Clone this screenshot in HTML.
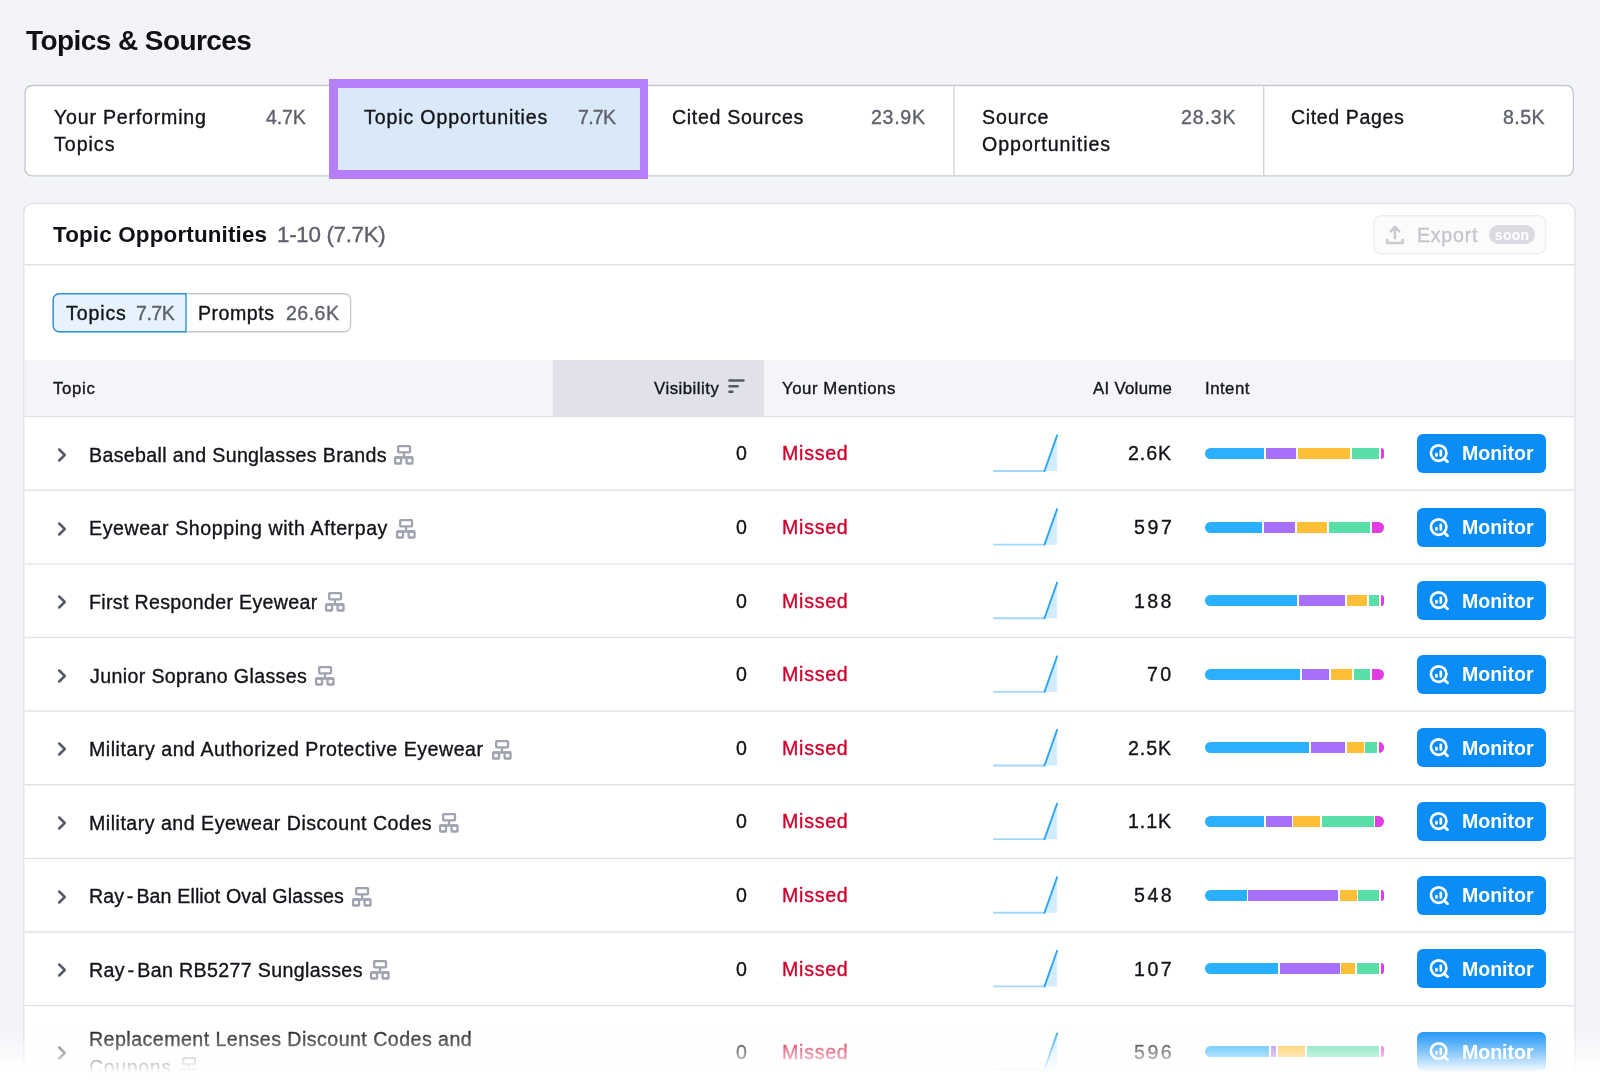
<!DOCTYPE html>
<html><head><meta charset="utf-8"><style>
html,body{margin:0;padding:0;}
body{width:1600px;height:1084px;overflow:hidden;position:relative;background:#F3F4F8;font-family:"Liberation Sans",sans-serif;}
.t{position:absolute;white-space:nowrap;will-change:transform;}
.tabs{position:absolute;left:25px;top:85.5px;width:1548.4px;height:90.4px;background:#fff;border-radius:7px;}
.ov{position:absolute;left:0;top:0;overflow:visible;}
.vdiv{position:absolute;top:85.5px;width:1px;height:90px;background:#D3D5DC;}
.selbg{position:absolute;left:335.4px;top:86.2px;width:308.3px;height:89px;background:#DAE9F8;}
.purple{position:absolute;left:329.3px;top:79.3px;width:318.9px;height:99.7px;background:#B77EFB;}
.purplein{position:absolute;left:337.6px;top:87.6px;width:302.4px;height:82.8px;background:#DAE9F8;}
.card{position:absolute;left:23.8px;top:203.4px;width:1551.2px;height:1000px;background:#fff;border-radius:9px;}
.hdiv{position:absolute;left:24.8px;width:1548.4px;height:1px;background:#E3E4EA;}
.export{position:absolute;left:1373.25px;top:215px;width:171px;height:37.5px;border:1px solid #EEEFF2;border-radius:7px;background:#FBFBFC;}
.soon{position:absolute;left:1489.25px;top:224.5px;width:45.75px;height:19.75px;border-radius:10px;background:#DADBE0;color:#fff;font-size:14px;line-height:20px;font-weight:700;text-align:center;letter-spacing:0.3px;}
.seg{position:absolute;left:52.5px;top:293.1px;width:297.8px;height:37.4px;border:1px solid #C7C9D1;border-radius:6px;}
.seg1{position:absolute;left:52.5px;top:293.1px;width:132.2px;height:37.4px;border:1px solid #2B94E1;border-radius:6px 0 0 6px;background:#E6F3FE;}
.thead{position:absolute;left:24.5px;top:359.9px;width:1549.8px;height:56.7px;background:#F4F5F9;}
.sortcol{position:absolute;left:553px;top:359.9px;width:211.3px;height:56.7px;background:#E0E1E9;}
.segb{position:absolute;height:11px;}
.mon{position:absolute;left:1417px;width:129px;height:39px;border-radius:6px;background:#0A8DF6;}
.fade{position:absolute;left:0;top:1025px;width:1600px;height:59px;background:linear-gradient(to bottom,rgba(255,255,255,0.000) 0.0%,rgba(255,255,255,0.057) 6.8%,rgba(255,255,255,0.127) 13.6%,rgba(255,255,255,0.203) 20.3%,rgba(255,255,255,0.283) 27.1%,rgba(255,255,255,0.365) 33.9%,rgba(255,255,255,0.451) 40.7%,rgba(255,255,255,0.538) 47.5%,rgba(255,255,255,0.627) 54.2%,rgba(255,255,255,0.718) 61.0%,rgba(255,255,255,0.811) 67.8%,rgba(255,255,255,0.905) 74.6%,rgba(255,255,255,1.000) 81.4%,rgba(255,255,255,1) 100%);}
</style></head><body>
<div class="t" style="left:25.60px;top:26.70px;font-size:28px;line-height:28px;color:#0F1116;font-weight:700;letter-spacing:-0.573px;">Topics &amp; Sources</div>
<div class="tabs"></div>
<svg class="ov" width="1600" height="1084" viewBox="0 0 1600 1084"><rect x="25.0" y="85.5" width="1548.4" height="90.4" rx="7" fill="none" stroke="#C6C9D1" stroke-width="1.4"/><path d="M334.68 86.2V175.2" stroke="#D0D3DA" stroke-width="1.4"/><path d="M644.36 86.2V175.2" stroke="#D0D3DA" stroke-width="1.4"/><path d="M954.04 86.2V175.2" stroke="#D0D3DA" stroke-width="1.4"/><path d="M1263.72 86.2V175.2" stroke="#D0D3DA" stroke-width="1.4"/></svg>
<div class="selbg"></div><div class="purple"></div><div class="purplein"></div>
<div class="t" style="left:54.20px;top:107.51px;font-size:19.6px;line-height:19.6px;color:#121419;font-weight:400;letter-spacing:0.786px;-webkit-text-stroke:0.35px #121419;">Your Performing</div>
<div class="t" style="left:54.20px;top:135.11px;font-size:19.6px;line-height:19.6px;color:#121419;font-weight:400;letter-spacing:0.980px;-webkit-text-stroke:0.35px #121419;">Topics</div>
<div class="t" style="left:266.00px;top:107.51px;font-size:19.6px;line-height:19.6px;color:#5E616B;font-weight:400;letter-spacing:-0.133px;-webkit-text-stroke:0.35px #5E616B;">4.7K</div>
<div class="t" style="left:363.75px;top:107.51px;font-size:19.6px;line-height:19.6px;color:#121419;font-weight:400;letter-spacing:0.861px;-webkit-text-stroke:0.35px #121419;">Topic Opportunities</div>
<div class="t" style="left:577.75px;top:107.51px;font-size:19.6px;line-height:19.6px;color:#5E616B;font-weight:400;letter-spacing:-0.750px;-webkit-text-stroke:0.35px #5E616B;">7.7K</div>
<div class="t" style="left:672.00px;top:107.51px;font-size:19.6px;line-height:19.6px;color:#121419;font-weight:400;letter-spacing:0.683px;-webkit-text-stroke:0.35px #121419;">Cited Sources</div>
<div class="t" style="left:871.20px;top:107.51px;font-size:19.6px;line-height:19.6px;color:#5E616B;font-weight:400;letter-spacing:0.700px;-webkit-text-stroke:0.35px #5E616B;">23.9K</div>
<div class="t" style="left:981.50px;top:107.51px;font-size:19.6px;line-height:19.6px;color:#121419;font-weight:400;letter-spacing:0.880px;-webkit-text-stroke:0.35px #121419;">Source</div>
<div class="t" style="left:981.50px;top:135.11px;font-size:19.6px;line-height:19.6px;color:#121419;font-weight:400;letter-spacing:0.967px;-webkit-text-stroke:0.35px #121419;">Opportunities</div>
<div class="t" style="left:1180.70px;top:107.51px;font-size:19.6px;line-height:19.6px;color:#5E616B;font-weight:400;letter-spacing:0.825px;-webkit-text-stroke:0.35px #5E616B;">28.3K</div>
<div class="t" style="left:1291.00px;top:107.51px;font-size:19.6px;line-height:19.6px;color:#121419;font-weight:400;letter-spacing:0.600px;-webkit-text-stroke:0.35px #121419;">Cited Pages</div>
<div class="t" style="left:1502.80px;top:107.51px;font-size:19.6px;line-height:19.6px;color:#5E616B;font-weight:400;letter-spacing:0.400px;-webkit-text-stroke:0.35px #5E616B;">8.5K</div>
<div class="card"></div>
<div class="t" style="left:53.20px;top:223.64px;font-size:22.4px;line-height:22.4px;color:#0F1116;font-weight:700;letter-spacing:0.167px;">Topic Opportunities</div>
<div class="t" style="left:276.50px;top:223.64px;font-size:22.4px;line-height:22.4px;color:#5E616B;font-weight:400;letter-spacing:-0.320px;-webkit-text-stroke:0.35px #5E616B;">1-10 (7.7K)</div>
<svg class="ov" width="1600" height="1084" viewBox="0 0 1600 1084"><rect x="1373.95" y="215.7" width="171.6" height="38.1" rx="7" fill="#FBFBFC" stroke="#EDEEF1" stroke-width="1.4"/></svg>
<svg style="position:absolute;left:1383px;top:224px" width="24" height="22" viewBox="0 0 24 22"><path d="M11.9 3.2v10.9M7.6 7.3L11.9 3.0 16.2 7.3M4.3 15.9v3.1h15.4v-3.1" fill="none" stroke="#CACBD1" stroke-width="2.6" stroke-linecap="round" stroke-linejoin="round"/></svg>
<div class="t" style="left:1417.25px;top:225.61px;font-size:19.6px;line-height:19.6px;color:#C3C5CC;font-weight:400;letter-spacing:0.750px;-webkit-text-stroke:0.35px #C3C5CC;">Export</div>
<div class="soon">soon</div>
<svg class="ov" width="1600" height="1084" viewBox="0 0 1600 1084"><rect x="53.2" y="293.8" width="297.4" height="38" rx="6" fill="#fff" stroke="#C6C9D1" stroke-width="1.4"/><path d="M186.0 293.8H59.2A6 6 0 0 0 53.2 299.8V325.8A6 6 0 0 0 59.2 331.8H186.0Z" fill="#E6F3FE" stroke="#2F90DC" stroke-width="1.4"/></svg>
<div class="t" style="left:65.60px;top:303.51px;font-size:19.6px;line-height:19.6px;color:#121419;font-weight:400;letter-spacing:0.860px;-webkit-text-stroke:0.35px #121419;">Topics</div>
<div class="t" style="left:135.90px;top:303.51px;font-size:19.6px;line-height:19.6px;color:#5E616B;font-weight:400;letter-spacing:-0.500px;-webkit-text-stroke:0.35px #5E616B;">7.7K</div>
<div class="t" style="left:197.70px;top:303.51px;font-size:19.6px;line-height:19.6px;color:#121419;font-weight:400;letter-spacing:0.500px;-webkit-text-stroke:0.35px #121419;">Prompts</div>
<div class="t" style="left:285.80px;top:303.51px;font-size:19.6px;line-height:19.6px;color:#5E616B;font-weight:400;letter-spacing:0.450px;-webkit-text-stroke:0.35px #5E616B;">26.6K</div>
<div class="thead"></div><div class="sortcol"></div>
<svg class="ov" width="1600" height="1084" viewBox="0 0 1600 1084"><path d="M23.8 1200V212.4A9 9 0 0 1 32.8 203.4H1566A9 9 0 0 1 1575 212.4V1200" fill="none" stroke="#E1E2E9" stroke-width="1.4"/><path d="M24.5 264.7H1574.3" stroke="#E1E2E9" stroke-width="1.4"/><path d="M24.5 416.60H1574.3" stroke="#E1E2E9" stroke-width="1.4"/><path d="M24.5 490.23H1574.3" stroke="#E1E2E9" stroke-width="1.4"/><path d="M24.5 563.85H1574.3" stroke="#E1E2E9" stroke-width="1.4"/><path d="M24.5 637.48H1574.3" stroke="#E1E2E9" stroke-width="1.4"/><path d="M24.5 711.10H1574.3" stroke="#E1E2E9" stroke-width="1.4"/><path d="M24.5 784.73H1574.3" stroke="#E1E2E9" stroke-width="1.4"/><path d="M24.5 858.35H1574.3" stroke="#E1E2E9" stroke-width="1.4"/><path d="M24.5 931.98H1574.3" stroke="#E1E2E9" stroke-width="1.4"/><path d="M24.5 1005.60H1574.3" stroke="#E1E2E9" stroke-width="1.4"/></svg>
<div class="t" style="left:53.25px;top:380.88px;font-size:16.8px;line-height:16.8px;color:#121419;font-weight:400;letter-spacing:0.688px;-webkit-text-stroke:0.35px #121419;">Topic</div>
<div class="t" style="left:654.10px;top:380.88px;font-size:16.8px;line-height:16.8px;color:#121419;font-weight:400;letter-spacing:0.511px;-webkit-text-stroke:0.35px #121419;">Visibility</div>
<svg style="position:absolute;left:727px;top:377px" width="20" height="20" viewBox="0 0 20 20"><path d="M2.4 3.5h14.1M2.4 9.3h8.3M2.4 14.8h3.1" stroke="#575A64" stroke-width="2.4" stroke-linecap="round" fill="none"/></svg>
<div class="t" style="left:782.40px;top:380.88px;font-size:16.8px;line-height:16.8px;color:#121419;font-weight:400;letter-spacing:0.558px;-webkit-text-stroke:0.35px #121419;">Your Mentions</div>
<div class="t" style="left:1092.90px;top:380.88px;font-size:16.8px;line-height:16.8px;color:#121419;font-weight:400;letter-spacing:0.300px;-webkit-text-stroke:0.35px #121419;">AI Volume</div>
<div class="t" style="left:1205.20px;top:380.88px;font-size:16.8px;line-height:16.8px;color:#121419;font-weight:400;letter-spacing:0.480px;-webkit-text-stroke:0.35px #121419;">Intent</div>
<svg style="position:absolute;left:52px;top:444.91px" width="20" height="20" viewBox="0 0 20 20"><path d="M7.2 4.5L12.8 10 7.2 15.5" fill="none" stroke="#575B66" stroke-width="2.5" stroke-linecap="round" stroke-linejoin="round"/></svg>
<div class="t" style="left:89.30px;top:445.72px;font-size:19.6px;line-height:19.6px;color:#121419;font-weight:400;letter-spacing:0.345px;-webkit-text-stroke:0.35px #121419;">Baseball and Sunglasses Brands</div>
<svg style="position:absolute;left:393.20px;top:444.11px" width="22" height="22" viewBox="0 0 22 22"><g fill="none" stroke="#A0A3AE" stroke-width="2.3" stroke-linejoin="round"><rect x="5.2" y="2.1" width="11.8" height="6.2" rx="0.6"/><rect x="2.1" y="13.5" width="5.9" height="6.0" rx="0.6"/><rect x="13.6" y="13.5" width="5.9" height="6.0" rx="0.6"/><path d="M11.0 8.3v5.2M2.1 13.5h17.4"/></g></svg>
<div class="t" style="left:736.20px;top:444.32px;font-size:19.6px;line-height:19.6px;color:#121419;font-weight:400;letter-spacing:0.000px;-webkit-text-stroke:0.35px #121419;">0</div>
<div class="t" style="left:782.30px;top:444.32px;font-size:19.6px;line-height:19.6px;color:#D0002E;font-weight:400;letter-spacing:0.740px;-webkit-text-stroke:0.35px #D0002E;">Missed</div>
<svg style="position:absolute;left:0;top:0;overflow:visible" width="1" height="1"><path d="M1044.5 471.01L1057.1 435.41V471.01Z" fill="#D3ECFD"/><path d="M993.1 471.01H1044.5" stroke="#A3D8FB" stroke-width="1.9" fill="none"/><path d="M1044.5 471.01L1057.1 435.41" stroke="#2AA5F8" stroke-width="1.9" fill="none" stroke-linecap="round"/></svg>
<div class="t" style="left:1128.40px;top:444.32px;font-size:19.6px;line-height:19.6px;color:#121419;font-weight:400;letter-spacing:0.933px;-webkit-text-stroke:0.35px #121419;">2.6K</div>
<div class="segb" style="left:1205.00px;top:447.91px;width:59.00px;background:#2AB0FF;border-radius:5.5px 0 0 5.5px;"></div>
<div class="segb" style="left:1265.60px;top:447.91px;width:30.90px;background:#A86FFB;"></div>
<div class="segb" style="left:1298.10px;top:447.91px;width:51.90px;background:#FFBE38;"></div>
<div class="segb" style="left:1351.50px;top:447.91px;width:27.50px;background:#5ADEA8;"></div>
<div class="segb" style="left:1380.60px;top:447.91px;width:3.10px;background:#E03DE3;border-radius:0 5.5px 5.5px 0;"></div>
<div class="mon" style="top:433.91px"></div>
<svg style="position:absolute;left:1427px;top:442.91px" width="24" height="24" viewBox="0 0 24 24"><circle cx="11.65" cy="10.05" r="7.75" fill="none" stroke="#fff" stroke-width="2.7"/><path d="M17.1 15.5L20.5 18.8" stroke="#fff" stroke-width="2.8" stroke-linecap="round"/><path d="M9.45 11.05v1.5M13.8 7.85v4.7" stroke="#fff" stroke-width="2.7" stroke-linecap="round"/></svg>
<div class="t" style="left:1461.80px;top:444.32px;font-size:19.6px;line-height:19.6px;color:#FFFFFF;font-weight:700;letter-spacing:-0.050px;">Monitor</div>
<svg style="position:absolute;left:52px;top:518.54px" width="20" height="20" viewBox="0 0 20 20"><path d="M7.2 4.5L12.8 10 7.2 15.5" fill="none" stroke="#575B66" stroke-width="2.5" stroke-linecap="round" stroke-linejoin="round"/></svg>
<div class="t" style="left:89.30px;top:519.35px;font-size:19.6px;line-height:19.6px;color:#121419;font-weight:400;letter-spacing:0.562px;-webkit-text-stroke:0.35px #121419;">Eyewear Shopping with Afterpay</div>
<svg style="position:absolute;left:394.50px;top:517.74px" width="22" height="22" viewBox="0 0 22 22"><g fill="none" stroke="#A0A3AE" stroke-width="2.3" stroke-linejoin="round"><rect x="5.2" y="2.1" width="11.8" height="6.2" rx="0.6"/><rect x="2.1" y="13.5" width="5.9" height="6.0" rx="0.6"/><rect x="13.6" y="13.5" width="5.9" height="6.0" rx="0.6"/><path d="M11.0 8.3v5.2M2.1 13.5h17.4"/></g></svg>
<div class="t" style="left:736.20px;top:517.95px;font-size:19.6px;line-height:19.6px;color:#121419;font-weight:400;letter-spacing:0.000px;-webkit-text-stroke:0.35px #121419;">0</div>
<div class="t" style="left:782.30px;top:517.95px;font-size:19.6px;line-height:19.6px;color:#D0002E;font-weight:400;letter-spacing:0.740px;-webkit-text-stroke:0.35px #D0002E;">Missed</div>
<svg style="position:absolute;left:0;top:0;overflow:visible" width="1" height="1"><path d="M1044.5 544.64L1057.1 509.04V544.64Z" fill="#D3ECFD"/><path d="M993.1 544.64H1044.5" stroke="#A3D8FB" stroke-width="1.9" fill="none"/><path d="M1044.5 544.64L1057.1 509.04" stroke="#2AA5F8" stroke-width="1.9" fill="none" stroke-linecap="round"/></svg>
<div class="t" style="left:1133.90px;top:517.95px;font-size:19.6px;line-height:19.6px;color:#121419;font-weight:400;letter-spacing:2.650px;-webkit-text-stroke:0.35px #121419;">597</div>
<div class="segb" style="left:1205.00px;top:521.54px;width:57.30px;background:#2AB0FF;border-radius:5.5px 0 0 5.5px;"></div>
<div class="segb" style="left:1264.30px;top:521.54px;width:30.70px;background:#A86FFB;"></div>
<div class="segb" style="left:1296.70px;top:521.54px;width:30.70px;background:#FFBE38;"></div>
<div class="segb" style="left:1329.00px;top:521.54px;width:41.20px;background:#5ADEA8;"></div>
<div class="segb" style="left:1372.00px;top:521.54px;width:11.70px;background:#E03DE3;border-radius:0 5.5px 5.5px 0;"></div>
<div class="mon" style="top:507.54px"></div>
<svg style="position:absolute;left:1427px;top:516.54px" width="24" height="24" viewBox="0 0 24 24"><circle cx="11.65" cy="10.05" r="7.75" fill="none" stroke="#fff" stroke-width="2.7"/><path d="M17.1 15.5L20.5 18.8" stroke="#fff" stroke-width="2.8" stroke-linecap="round"/><path d="M9.45 11.05v1.5M13.8 7.85v4.7" stroke="#fff" stroke-width="2.7" stroke-linecap="round"/></svg>
<div class="t" style="left:1461.80px;top:517.95px;font-size:19.6px;line-height:19.6px;color:#FFFFFF;font-weight:700;letter-spacing:-0.050px;">Monitor</div>
<svg style="position:absolute;left:52px;top:592.16px" width="20" height="20" viewBox="0 0 20 20"><path d="M7.2 4.5L12.8 10 7.2 15.5" fill="none" stroke="#575B66" stroke-width="2.5" stroke-linecap="round" stroke-linejoin="round"/></svg>
<div class="t" style="left:89.30px;top:592.97px;font-size:19.6px;line-height:19.6px;color:#121419;font-weight:400;letter-spacing:0.327px;-webkit-text-stroke:0.35px #121419;">First Responder Eyewear</div>
<svg style="position:absolute;left:324.40px;top:591.36px" width="22" height="22" viewBox="0 0 22 22"><g fill="none" stroke="#A0A3AE" stroke-width="2.3" stroke-linejoin="round"><rect x="5.2" y="2.1" width="11.8" height="6.2" rx="0.6"/><rect x="2.1" y="13.5" width="5.9" height="6.0" rx="0.6"/><rect x="13.6" y="13.5" width="5.9" height="6.0" rx="0.6"/><path d="M11.0 8.3v5.2M2.1 13.5h17.4"/></g></svg>
<div class="t" style="left:736.20px;top:591.57px;font-size:19.6px;line-height:19.6px;color:#121419;font-weight:400;letter-spacing:0.000px;-webkit-text-stroke:0.35px #121419;">0</div>
<div class="t" style="left:782.30px;top:591.57px;font-size:19.6px;line-height:19.6px;color:#D0002E;font-weight:400;letter-spacing:0.740px;-webkit-text-stroke:0.35px #D0002E;">Missed</div>
<svg style="position:absolute;left:0;top:0;overflow:visible" width="1" height="1"><path d="M1044.5 618.26L1057.1 582.66V618.26Z" fill="#D3ECFD"/><path d="M993.1 618.26H1044.5" stroke="#A3D8FB" stroke-width="1.9" fill="none"/><path d="M1044.5 618.26L1057.1 582.66" stroke="#2AA5F8" stroke-width="1.9" fill="none" stroke-linecap="round"/></svg>
<div class="t" style="left:1134.40px;top:591.57px;font-size:19.6px;line-height:19.6px;color:#121419;font-weight:400;letter-spacing:2.400px;-webkit-text-stroke:0.35px #121419;">188</div>
<div class="segb" style="left:1205.00px;top:595.16px;width:92.00px;background:#2AB0FF;border-radius:5.5px 0 0 5.5px;"></div>
<div class="segb" style="left:1299.00px;top:595.16px;width:46.00px;background:#A86FFB;"></div>
<div class="segb" style="left:1346.70px;top:595.16px;width:20.60px;background:#FFBE38;"></div>
<div class="segb" style="left:1369.00px;top:595.16px;width:9.90px;background:#5ADEA8;"></div>
<div class="segb" style="left:1380.50px;top:595.16px;width:3.20px;background:#E03DE3;border-radius:0 5.5px 5.5px 0;"></div>
<div class="mon" style="top:581.16px"></div>
<svg style="position:absolute;left:1427px;top:590.16px" width="24" height="24" viewBox="0 0 24 24"><circle cx="11.65" cy="10.05" r="7.75" fill="none" stroke="#fff" stroke-width="2.7"/><path d="M17.1 15.5L20.5 18.8" stroke="#fff" stroke-width="2.8" stroke-linecap="round"/><path d="M9.45 11.05v1.5M13.8 7.85v4.7" stroke="#fff" stroke-width="2.7" stroke-linecap="round"/></svg>
<div class="t" style="left:1461.80px;top:591.57px;font-size:19.6px;line-height:19.6px;color:#FFFFFF;font-weight:700;letter-spacing:-0.050px;">Monitor</div>
<svg style="position:absolute;left:52px;top:665.79px" width="20" height="20" viewBox="0 0 20 20"><path d="M7.2 4.5L12.8 10 7.2 15.5" fill="none" stroke="#575B66" stroke-width="2.5" stroke-linecap="round" stroke-linejoin="round"/></svg>
<div class="t" style="left:90.30px;top:666.60px;font-size:19.6px;line-height:19.6px;color:#121419;font-weight:400;letter-spacing:0.367px;-webkit-text-stroke:0.35px #121419;">Junior Soprano Glasses</div>
<svg style="position:absolute;left:313.90px;top:664.99px" width="22" height="22" viewBox="0 0 22 22"><g fill="none" stroke="#A0A3AE" stroke-width="2.3" stroke-linejoin="round"><rect x="5.2" y="2.1" width="11.8" height="6.2" rx="0.6"/><rect x="2.1" y="13.5" width="5.9" height="6.0" rx="0.6"/><rect x="13.6" y="13.5" width="5.9" height="6.0" rx="0.6"/><path d="M11.0 8.3v5.2M2.1 13.5h17.4"/></g></svg>
<div class="t" style="left:736.20px;top:665.20px;font-size:19.6px;line-height:19.6px;color:#121419;font-weight:400;letter-spacing:0.000px;-webkit-text-stroke:0.35px #121419;">0</div>
<div class="t" style="left:782.30px;top:665.20px;font-size:19.6px;line-height:19.6px;color:#D0002E;font-weight:400;letter-spacing:0.740px;-webkit-text-stroke:0.35px #D0002E;">Missed</div>
<svg style="position:absolute;left:0;top:0;overflow:visible" width="1" height="1"><path d="M1044.5 691.89L1057.1 656.29V691.89Z" fill="#D3ECFD"/><path d="M993.1 691.89H1044.5" stroke="#A3D8FB" stroke-width="1.9" fill="none"/><path d="M1044.5 691.89L1057.1 656.29" stroke="#2AA5F8" stroke-width="1.9" fill="none" stroke-linecap="round"/></svg>
<div class="t" style="left:1146.90px;top:665.20px;font-size:19.6px;line-height:19.6px;color:#121419;font-weight:400;letter-spacing:2.300px;-webkit-text-stroke:0.35px #121419;">70</div>
<div class="segb" style="left:1205.00px;top:668.79px;width:95.00px;background:#2AB0FF;border-radius:5.5px 0 0 5.5px;"></div>
<div class="segb" style="left:1302.00px;top:668.79px;width:27.40px;background:#A86FFB;"></div>
<div class="segb" style="left:1331.00px;top:668.79px;width:21.00px;background:#FFBE38;"></div>
<div class="segb" style="left:1353.60px;top:668.79px;width:16.60px;background:#5ADEA8;"></div>
<div class="segb" style="left:1372.00px;top:668.79px;width:11.70px;background:#E03DE3;border-radius:0 5.5px 5.5px 0;"></div>
<div class="mon" style="top:654.79px"></div>
<svg style="position:absolute;left:1427px;top:663.79px" width="24" height="24" viewBox="0 0 24 24"><circle cx="11.65" cy="10.05" r="7.75" fill="none" stroke="#fff" stroke-width="2.7"/><path d="M17.1 15.5L20.5 18.8" stroke="#fff" stroke-width="2.8" stroke-linecap="round"/><path d="M9.45 11.05v1.5M13.8 7.85v4.7" stroke="#fff" stroke-width="2.7" stroke-linecap="round"/></svg>
<div class="t" style="left:1461.80px;top:665.20px;font-size:19.6px;line-height:19.6px;color:#FFFFFF;font-weight:700;letter-spacing:-0.050px;">Monitor</div>
<svg style="position:absolute;left:52px;top:739.41px" width="20" height="20" viewBox="0 0 20 20"><path d="M7.2 4.5L12.8 10 7.2 15.5" fill="none" stroke="#575B66" stroke-width="2.5" stroke-linecap="round" stroke-linejoin="round"/></svg>
<div class="t" style="left:89.30px;top:740.22px;font-size:19.6px;line-height:19.6px;color:#121419;font-weight:400;letter-spacing:0.527px;-webkit-text-stroke:0.35px #121419;">Military and Authorized Protective Eyewear</div>
<svg style="position:absolute;left:490.80px;top:738.61px" width="22" height="22" viewBox="0 0 22 22"><g fill="none" stroke="#A0A3AE" stroke-width="2.3" stroke-linejoin="round"><rect x="5.2" y="2.1" width="11.8" height="6.2" rx="0.6"/><rect x="2.1" y="13.5" width="5.9" height="6.0" rx="0.6"/><rect x="13.6" y="13.5" width="5.9" height="6.0" rx="0.6"/><path d="M11.0 8.3v5.2M2.1 13.5h17.4"/></g></svg>
<div class="t" style="left:736.20px;top:738.82px;font-size:19.6px;line-height:19.6px;color:#121419;font-weight:400;letter-spacing:0.000px;-webkit-text-stroke:0.35px #121419;">0</div>
<div class="t" style="left:782.30px;top:738.82px;font-size:19.6px;line-height:19.6px;color:#D0002E;font-weight:400;letter-spacing:0.740px;-webkit-text-stroke:0.35px #D0002E;">Missed</div>
<svg style="position:absolute;left:0;top:0;overflow:visible" width="1" height="1"><path d="M1044.5 765.51L1057.1 729.91V765.51Z" fill="#D3ECFD"/><path d="M993.1 765.51H1044.5" stroke="#A3D8FB" stroke-width="1.9" fill="none"/><path d="M1044.5 765.51L1057.1 729.91" stroke="#2AA5F8" stroke-width="1.9" fill="none" stroke-linecap="round"/></svg>
<div class="t" style="left:1128.40px;top:738.82px;font-size:19.6px;line-height:19.6px;color:#121419;font-weight:400;letter-spacing:0.933px;-webkit-text-stroke:0.35px #121419;">2.5K</div>
<div class="segb" style="left:1205.00px;top:742.41px;width:104.10px;background:#2AB0FF;border-radius:5.5px 0 0 5.5px;"></div>
<div class="segb" style="left:1310.80px;top:742.41px;width:34.20px;background:#A86FFB;"></div>
<div class="segb" style="left:1346.70px;top:742.41px;width:17.40px;background:#FFBE38;"></div>
<div class="segb" style="left:1365.30px;top:742.41px;width:11.90px;background:#5ADEA8;"></div>
<div class="segb" style="left:1378.90px;top:742.41px;width:4.80px;background:#E03DE3;border-radius:0 5.5px 5.5px 0;"></div>
<div class="mon" style="top:728.41px"></div>
<svg style="position:absolute;left:1427px;top:737.41px" width="24" height="24" viewBox="0 0 24 24"><circle cx="11.65" cy="10.05" r="7.75" fill="none" stroke="#fff" stroke-width="2.7"/><path d="M17.1 15.5L20.5 18.8" stroke="#fff" stroke-width="2.8" stroke-linecap="round"/><path d="M9.45 11.05v1.5M13.8 7.85v4.7" stroke="#fff" stroke-width="2.7" stroke-linecap="round"/></svg>
<div class="t" style="left:1461.80px;top:738.82px;font-size:19.6px;line-height:19.6px;color:#FFFFFF;font-weight:700;letter-spacing:-0.050px;">Monitor</div>
<svg style="position:absolute;left:52px;top:813.04px" width="20" height="20" viewBox="0 0 20 20"><path d="M7.2 4.5L12.8 10 7.2 15.5" fill="none" stroke="#575B66" stroke-width="2.5" stroke-linecap="round" stroke-linejoin="round"/></svg>
<div class="t" style="left:89.30px;top:813.85px;font-size:19.6px;line-height:19.6px;color:#121419;font-weight:400;letter-spacing:0.499px;-webkit-text-stroke:0.35px #121419;">Military and Eyewear Discount Codes</div>
<svg style="position:absolute;left:438.15px;top:812.24px" width="22" height="22" viewBox="0 0 22 22"><g fill="none" stroke="#A0A3AE" stroke-width="2.3" stroke-linejoin="round"><rect x="5.2" y="2.1" width="11.8" height="6.2" rx="0.6"/><rect x="2.1" y="13.5" width="5.9" height="6.0" rx="0.6"/><rect x="13.6" y="13.5" width="5.9" height="6.0" rx="0.6"/><path d="M11.0 8.3v5.2M2.1 13.5h17.4"/></g></svg>
<div class="t" style="left:736.20px;top:812.45px;font-size:19.6px;line-height:19.6px;color:#121419;font-weight:400;letter-spacing:0.000px;-webkit-text-stroke:0.35px #121419;">0</div>
<div class="t" style="left:782.30px;top:812.45px;font-size:19.6px;line-height:19.6px;color:#D0002E;font-weight:400;letter-spacing:0.740px;-webkit-text-stroke:0.35px #D0002E;">Missed</div>
<svg style="position:absolute;left:0;top:0;overflow:visible" width="1" height="1"><path d="M1044.5 839.14L1057.1 803.54V839.14Z" fill="#D3ECFD"/><path d="M993.1 839.14H1044.5" stroke="#A3D8FB" stroke-width="1.9" fill="none"/><path d="M1044.5 839.14L1057.1 803.54" stroke="#2AA5F8" stroke-width="1.9" fill="none" stroke-linecap="round"/></svg>
<div class="t" style="left:1128.40px;top:812.45px;font-size:19.6px;line-height:19.6px;color:#121419;font-weight:400;letter-spacing:0.933px;-webkit-text-stroke:0.35px #121419;">1.1K</div>
<div class="segb" style="left:1205.00px;top:816.04px;width:58.90px;background:#2AB0FF;border-radius:5.5px 0 0 5.5px;"></div>
<div class="segb" style="left:1265.90px;top:816.04px;width:25.80px;background:#A86FFB;"></div>
<div class="segb" style="left:1293.00px;top:816.04px;width:27.40px;background:#FFBE38;"></div>
<div class="segb" style="left:1322.00px;top:816.04px;width:52.00px;background:#5ADEA8;"></div>
<div class="segb" style="left:1375.40px;top:816.04px;width:8.30px;background:#E03DE3;border-radius:0 5.5px 5.5px 0;"></div>
<div class="mon" style="top:802.04px"></div>
<svg style="position:absolute;left:1427px;top:811.04px" width="24" height="24" viewBox="0 0 24 24"><circle cx="11.65" cy="10.05" r="7.75" fill="none" stroke="#fff" stroke-width="2.7"/><path d="M17.1 15.5L20.5 18.8" stroke="#fff" stroke-width="2.8" stroke-linecap="round"/><path d="M9.45 11.05v1.5M13.8 7.85v4.7" stroke="#fff" stroke-width="2.7" stroke-linecap="round"/></svg>
<div class="t" style="left:1461.80px;top:812.45px;font-size:19.6px;line-height:19.6px;color:#FFFFFF;font-weight:700;letter-spacing:-0.050px;">Monitor</div>
<svg style="position:absolute;left:52px;top:886.66px" width="20" height="20" viewBox="0 0 20 20"><path d="M7.2 4.5L12.8 10 7.2 15.5" fill="none" stroke="#575B66" stroke-width="2.5" stroke-linecap="round" stroke-linejoin="round"/></svg>
<div class="t" style="left:89.30px;top:887.47px;font-size:19.6px;line-height:19.6px;color:#121419;font-weight:400;letter-spacing:0.127px;-webkit-text-stroke:0.35px #121419;">Ray<span style='margin:0 3px 0 2.5px'>-</span>Ban Elliot Oval Glasses</div>
<svg style="position:absolute;left:350.50px;top:885.86px" width="22" height="22" viewBox="0 0 22 22"><g fill="none" stroke="#A0A3AE" stroke-width="2.3" stroke-linejoin="round"><rect x="5.2" y="2.1" width="11.8" height="6.2" rx="0.6"/><rect x="2.1" y="13.5" width="5.9" height="6.0" rx="0.6"/><rect x="13.6" y="13.5" width="5.9" height="6.0" rx="0.6"/><path d="M11.0 8.3v5.2M2.1 13.5h17.4"/></g></svg>
<div class="t" style="left:736.20px;top:886.07px;font-size:19.6px;line-height:19.6px;color:#121419;font-weight:400;letter-spacing:0.000px;-webkit-text-stroke:0.35px #121419;">0</div>
<div class="t" style="left:782.30px;top:886.07px;font-size:19.6px;line-height:19.6px;color:#D0002E;font-weight:400;letter-spacing:0.740px;-webkit-text-stroke:0.35px #D0002E;">Missed</div>
<svg style="position:absolute;left:0;top:0;overflow:visible" width="1" height="1"><path d="M1044.5 912.76L1057.1 877.16V912.76Z" fill="#D3ECFD"/><path d="M993.1 912.76H1044.5" stroke="#A3D8FB" stroke-width="1.9" fill="none"/><path d="M1044.5 912.76L1057.1 877.16" stroke="#2AA5F8" stroke-width="1.9" fill="none" stroke-linecap="round"/></svg>
<div class="t" style="left:1134.20px;top:886.07px;font-size:19.6px;line-height:19.6px;color:#121419;font-weight:400;letter-spacing:2.500px;-webkit-text-stroke:0.35px #121419;">548</div>
<div class="segb" style="left:1205.00px;top:889.66px;width:42.00px;background:#2AB0FF;border-radius:5.5px 0 0 5.5px;"></div>
<div class="segb" style="left:1248.30px;top:889.66px;width:89.60px;background:#A86FFB;"></div>
<div class="segb" style="left:1339.50px;top:889.66px;width:17.50px;background:#FFBE38;"></div>
<div class="segb" style="left:1358.30px;top:889.66px;width:20.60px;background:#5ADEA8;"></div>
<div class="segb" style="left:1380.50px;top:889.66px;width:3.20px;background:#E03DE3;border-radius:0 5.5px 5.5px 0;"></div>
<div class="mon" style="top:875.66px"></div>
<svg style="position:absolute;left:1427px;top:884.66px" width="24" height="24" viewBox="0 0 24 24"><circle cx="11.65" cy="10.05" r="7.75" fill="none" stroke="#fff" stroke-width="2.7"/><path d="M17.1 15.5L20.5 18.8" stroke="#fff" stroke-width="2.8" stroke-linecap="round"/><path d="M9.45 11.05v1.5M13.8 7.85v4.7" stroke="#fff" stroke-width="2.7" stroke-linecap="round"/></svg>
<div class="t" style="left:1461.80px;top:886.07px;font-size:19.6px;line-height:19.6px;color:#FFFFFF;font-weight:700;letter-spacing:-0.050px;">Monitor</div>
<svg style="position:absolute;left:52px;top:960.29px" width="20" height="20" viewBox="0 0 20 20"><path d="M7.2 4.5L12.8 10 7.2 15.5" fill="none" stroke="#575B66" stroke-width="2.5" stroke-linecap="round" stroke-linejoin="round"/></svg>
<div class="t" style="left:89.30px;top:961.10px;font-size:19.6px;line-height:19.6px;color:#121419;font-weight:400;letter-spacing:0.362px;-webkit-text-stroke:0.35px #121419;">Ray<span style='margin:0 3px 0 2.5px'>-</span>Ban RB5277 Sunglasses</div>
<svg style="position:absolute;left:368.90px;top:959.49px" width="22" height="22" viewBox="0 0 22 22"><g fill="none" stroke="#A0A3AE" stroke-width="2.3" stroke-linejoin="round"><rect x="5.2" y="2.1" width="11.8" height="6.2" rx="0.6"/><rect x="2.1" y="13.5" width="5.9" height="6.0" rx="0.6"/><rect x="13.6" y="13.5" width="5.9" height="6.0" rx="0.6"/><path d="M11.0 8.3v5.2M2.1 13.5h17.4"/></g></svg>
<div class="t" style="left:736.20px;top:959.70px;font-size:19.6px;line-height:19.6px;color:#121419;font-weight:400;letter-spacing:0.000px;-webkit-text-stroke:0.35px #121419;">0</div>
<div class="t" style="left:782.30px;top:959.70px;font-size:19.6px;line-height:19.6px;color:#D0002E;font-weight:400;letter-spacing:0.740px;-webkit-text-stroke:0.35px #D0002E;">Missed</div>
<svg style="position:absolute;left:0;top:0;overflow:visible" width="1" height="1"><path d="M1044.5 986.39L1057.1 950.79V986.39Z" fill="#D3ECFD"/><path d="M993.1 986.39H1044.5" stroke="#A3D8FB" stroke-width="1.9" fill="none"/><path d="M1044.5 986.39L1057.1 950.79" stroke="#2AA5F8" stroke-width="1.9" fill="none" stroke-linecap="round"/></svg>
<div class="t" style="left:1134.20px;top:959.70px;font-size:19.6px;line-height:19.6px;color:#121419;font-weight:400;letter-spacing:2.500px;-webkit-text-stroke:0.35px #121419;">107</div>
<div class="segb" style="left:1205.00px;top:963.29px;width:72.90px;background:#2AB0FF;border-radius:5.5px 0 0 5.5px;"></div>
<div class="segb" style="left:1279.75px;top:963.29px;width:60.25px;background:#A86FFB;"></div>
<div class="segb" style="left:1341.25px;top:963.29px;width:13.75px;background:#FFBE38;"></div>
<div class="segb" style="left:1356.90px;top:963.29px;width:22.10px;background:#5ADEA8;"></div>
<div class="segb" style="left:1380.60px;top:963.29px;width:3.10px;background:#E03DE3;border-radius:0 5.5px 5.5px 0;"></div>
<div class="mon" style="top:949.29px"></div>
<svg style="position:absolute;left:1427px;top:958.29px" width="24" height="24" viewBox="0 0 24 24"><circle cx="11.65" cy="10.05" r="7.75" fill="none" stroke="#fff" stroke-width="2.7"/><path d="M17.1 15.5L20.5 18.8" stroke="#fff" stroke-width="2.8" stroke-linecap="round"/><path d="M9.45 11.05v1.5M13.8 7.85v4.7" stroke="#fff" stroke-width="2.7" stroke-linecap="round"/></svg>
<div class="t" style="left:1461.80px;top:959.70px;font-size:19.6px;line-height:19.6px;color:#FFFFFF;font-weight:700;letter-spacing:-0.050px;">Monitor</div>
<svg style="position:absolute;left:52px;top:1043.10px" width="20" height="20" viewBox="0 0 20 20"><path d="M7.2 4.5L12.8 10 7.2 15.5" fill="none" stroke="#575B66" stroke-width="2.5" stroke-linecap="round" stroke-linejoin="round"/></svg>
<div class="t" style="left:89.30px;top:1030.21px;font-size:19.6px;line-height:19.6px;color:#121419;font-weight:400;letter-spacing:0.464px;-webkit-text-stroke:0.35px #121419;">Replacement Lenses Discount Codes and</div>
<div class="t" style="left:89.30px;top:1057.81px;font-size:19.6px;line-height:19.6px;color:#121419;font-weight:400;letter-spacing:0.617px;-webkit-text-stroke:0.35px #121419;">Coupons</div>
<svg style="position:absolute;left:177.90px;top:1056.10px" width="22" height="22" viewBox="0 0 22 22"><g fill="none" stroke="#A0A3AE" stroke-width="2.3" stroke-linejoin="round"><rect x="5.2" y="2.1" width="11.8" height="6.2" rx="0.6"/><rect x="2.1" y="13.5" width="5.9" height="6.0" rx="0.6"/><rect x="13.6" y="13.5" width="5.9" height="6.0" rx="0.6"/><path d="M11.0 8.3v5.2M2.1 13.5h17.4"/></g></svg>
<div class="t" style="left:736.20px;top:1042.51px;font-size:19.6px;line-height:19.6px;color:#121419;font-weight:400;letter-spacing:0.000px;-webkit-text-stroke:0.35px #121419;">0</div>
<div class="t" style="left:782.30px;top:1042.51px;font-size:19.6px;line-height:19.6px;color:#D0002E;font-weight:400;letter-spacing:0.740px;-webkit-text-stroke:0.35px #D0002E;">Missed</div>
<svg style="position:absolute;left:0;top:0;overflow:visible" width="1" height="1"><path d="M1044.5 1069.20L1057.1 1033.60V1069.20Z" fill="#D3ECFD"/><path d="M993.1 1069.20H1044.5" stroke="#A3D8FB" stroke-width="1.9" fill="none"/><path d="M1044.5 1069.20L1057.1 1033.60" stroke="#2AA5F8" stroke-width="1.9" fill="none" stroke-linecap="round"/></svg>
<div class="t" style="left:1134.20px;top:1042.51px;font-size:19.6px;line-height:19.6px;color:#121419;font-weight:400;letter-spacing:2.500px;-webkit-text-stroke:0.35px #121419;">596</div>
<div class="segb" style="left:1205.00px;top:1046.10px;width:64.10px;background:#2AB0FF;border-radius:5.5px 0 0 5.5px;"></div>
<div class="segb" style="left:1271.00px;top:1046.10px;width:5.00px;background:#A86FFB;"></div>
<div class="segb" style="left:1277.50px;top:1046.10px;width:27.50px;background:#FFBE38;"></div>
<div class="segb" style="left:1306.90px;top:1046.10px;width:72.10px;background:#5ADEA8;"></div>
<div class="segb" style="left:1380.60px;top:1046.10px;width:3.10px;background:#E03DE3;border-radius:0 5.5px 5.5px 0;"></div>
<div class="mon" style="top:1032.10px"></div>
<svg style="position:absolute;left:1427px;top:1041.10px" width="24" height="24" viewBox="0 0 24 24"><circle cx="11.65" cy="10.05" r="7.75" fill="none" stroke="#fff" stroke-width="2.7"/><path d="M17.1 15.5L20.5 18.8" stroke="#fff" stroke-width="2.8" stroke-linecap="round"/><path d="M9.45 11.05v1.5M13.8 7.85v4.7" stroke="#fff" stroke-width="2.7" stroke-linecap="round"/></svg>
<div class="t" style="left:1461.80px;top:1042.51px;font-size:19.6px;line-height:19.6px;color:#FFFFFF;font-weight:700;letter-spacing:-0.050px;">Monitor</div>
<div class="fade"></div>
</body></html>
